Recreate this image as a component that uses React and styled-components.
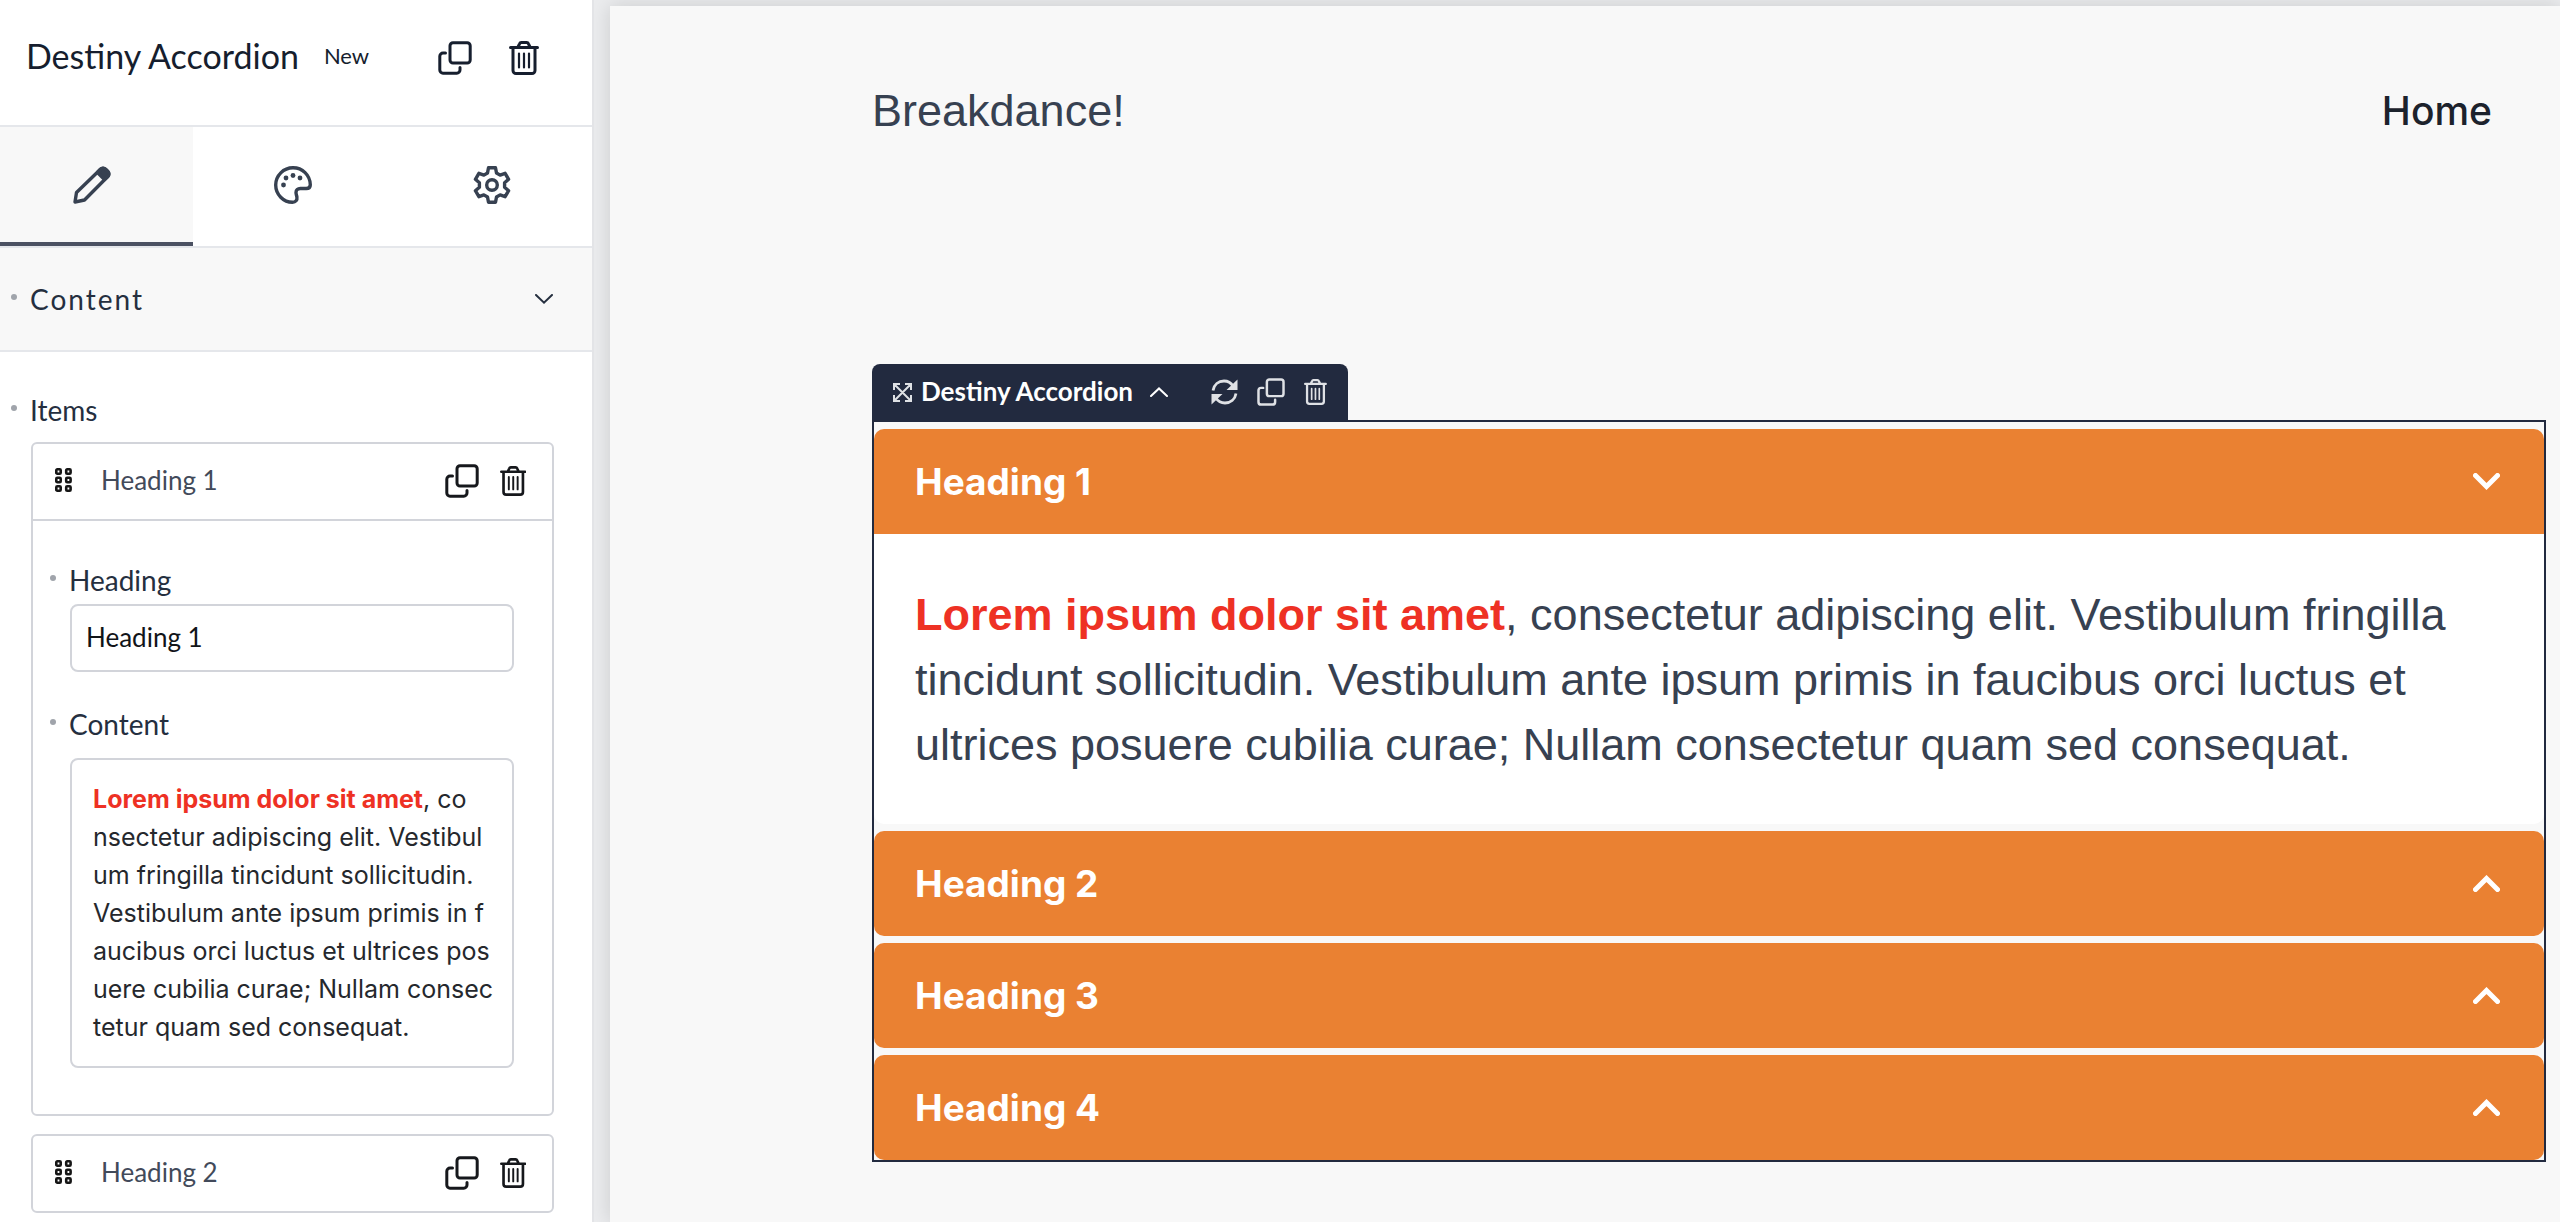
import React, { useState } from "react";
import styled, { createGlobalStyle } from "styled-components";

const GlobalStyle = createGlobalStyle`
  * {
    box-sizing: border-box;
  }
  body {
    margin: 0;
    background-color: #ffffff;
    font-family: Lato, "Open Sans", sans-serif;
  }
  button {
    font: inherit;
    color: inherit;
    background: none;
    border: none;
    padding: 0;
    cursor: pointer;
  }
`;

const Wrapper = styled.div`
  display: flex;
  min-height: 100vh;
`;

const Sidebar = styled.aside`
  flex: 0 0 594px;
  border-right: 2px solid #e3e4e7;
  background-color: #ffffff;
  color: #252f3f;
`;

const Header = styled.header`
  display: flex;
  align-items: center;
  height: 127px;
  padding: 0 53px 10px 26px;
  border-bottom: 2px solid #e5e7eb;
  color: #161e2e;
`;

const Title = styled.h1`
  margin: 0;
  padding-bottom: 4px;
  font-size: 34px;
  font-weight: 400;
  line-height: 40px;
`;

const Tag = styled.span`
  margin-left: 25px;
  padding-bottom: 3px;
  font-size: 22px;
  line-height: 40px;
`;

const Actions = styled.div`
  display: flex;
  align-items: center;
  gap: ${(p) => p.$gap}px;
  margin-left: auto;
`;

const IconButton = styled.button`
  display: flex;
`;

const Tabs = styled.div`
  display: grid;
  grid-template-columns: 193fr 200fr 200fr;
  height: 121px;
  border-bottom: 2px solid #e5e7eb;
`;

const Tab = styled.button`
  display: flex;
  align-items: center;
  justify-content: center;
  color: #374151;
  border-bottom: 4px solid ${(p) => (p.$active ? "#4b5162" : "transparent")};
  background-color: ${(p) => (p.$active ? "#f8f8f8" : "#ffffff")};

  &:first-child {
    padding-right: 8px;
  }
`;

const Section = styled.button`
  display: flex;
  align-items: center;
  width: 100%;
  height: 104px;
  padding: 0 39px 0 11px;
  background-color: #f8f8f8;
  border-bottom: 2px solid #e5e7eb;
  font-size: 28px;
  letter-spacing: 2px;

  & > svg {
    margin-left: auto;
  }
`;

const Dot = styled.span`
  width: 6px;
  height: 6px;
  margin: 0 13px 4px 0;
  border-radius: 50%;
  background-color: #a0a4ab;
`;

const Items = styled.div`
  padding: 42px 38px 8px 31px;
`;

const Label = styled.label`
  display: flex;
  align-items: center;
  margin-left: -20px;
  font-size: 28px;
  line-height: 32px;
`;

const List = styled.div`
  display: flex;
  flex-direction: column;
  gap: 18px;
  margin-top: 16px;
`;

const Card = styled.div`
  border: 2px solid #d2d4da;
  border-radius: 6px;
`;

const CardTop = styled.div`
  display: flex;
  align-items: center;
  height: 75px;
  padding: 0 26px 2px 22px;
  color: #16181c;

  & > span {
    margin-left: 28px;
    padding-bottom: 2px;
    font-size: 26px;
    color: #424a5a;
  }
`;

const CardBody = styled.div`
  display: flex;
  flex-direction: column;
  gap: 36px;
  padding: 43px 38px 46px 37px;
  border-top: 2px solid #d2d4da;
`;

const Field = styled.div`
  display: flex;
  flex-direction: column;
  gap: ${(p) => p.$gap}px;
`;

const Input = styled.input`
  width: 100%;
  height: 68px;
  padding: 0 14px 2px;
  border: 2px solid #d2d4da;
  border-radius: 8px;
  font: inherit;
  font-size: 26px;
  color: #111418;
  outline: none;
`;

const Editor = styled.div`
  padding: 20px 12px 20px 21px;
  border: 2px solid #d2d4da;
  border-radius: 8px;
  font-family: Inter, "Liberation Sans", sans-serif;
  font-size: 25px;
  line-height: 38px;
  color: #25282d;
  outline: none;

  & > p {
    margin: 0;
  }
`;

const Red = styled.strong`
  color: #ee3124;
  font-weight: 700;
`;

const Stage = styled.main`
  flex: 1;
  min-width: 0;
  display: flex;
  padding: 6px 0 0 16px;
  background-color: #ebecee;
  overflow: hidden;
`;

const Canvas = styled.div`
  flex: 1;
  min-width: 0;
  padding: 0 14px 0 262px;
  background-color: #f8f8f8;
  box-shadow: 0 0 20px rgba(0, 0, 0, 0.14);
  font-family: Inter, "Liberation Sans", sans-serif;
  color: #374151;
`;

const Nav = styled.nav`
  display: flex;
  align-items: center;
  justify-content: space-between;
  height: 210px;
  padding: 0 54px 0 0;
`;

const Brand = styled.span`
  font-family: "Liberation Sans", Arial, sans-serif;
  font-size: 45px;
  line-height: 60px;
`;

const NavLink = styled.a`
  font-size: 39px;
  font-weight: 500;
  line-height: 60px;
  color: #1c222c;
  text-decoration: none;
`;

const Toolbar = styled.div`
  display: flex;
  align-items: center;
  width: max-content;
  height: 56px;
  margin-top: 148px;
  padding: 0 21px;
  border-radius: 8px 8px 0 0;
  background-color: #222a3f;
  color: #dfe1e5;
  font-family: Lato, "Open Sans", sans-serif;
`;

const ToolbarName = styled.button`
  display: flex;
  align-items: center;
  margin-right: 43px;
  font-size: 26px;
  font-weight: 700;
  color: #ffffff;

  & > span {
    margin: 0 17px 0 9px;
    padding-bottom: 2px;
  }
`;

const Frame = styled.section`
  border: 2px solid #222a3f;
`;

const AccItem = styled.div`
  margin-top: 7px;
`;

const AccHead = styled.button`
  display: flex;
  align-items: center;
  justify-content: space-between;
  width: 100%;
  height: 105px;
  padding: 0 44px 0 41px;
  border-radius: ${(p) => (p.$open ? "10px 10px 0 0" : "10px")};
  background-color: #ea8132;
  color: #ffffff;
  font-size: 37px;
  font-weight: 700;
`;

const AccBody = styled.div`
  padding: 48px 41px 47px;
  border-radius: 0 0 10px 10px;
  background-color: #ffffff;
  font-family: "Liberation Sans", Arial, sans-serif;
  font-size: 45px;
  line-height: 65px;
`;

const CopyIcon = ({ size = 34, stroke = 3 }) => (
  <svg width={size} height={size} viewBox="0 0 34 34" fill="none" stroke="currentColor" strokeWidth={stroke} strokeLinecap="round" strokeLinejoin="round">
    <rect x="12" y="1.8" width="20.2" height="20.2" rx="3" />
    <path d="M7.5 12H5a3.2 3.2 0 0 0-3.2 3.2v13.8A3.2 3.2 0 0 0 5 32.2h13.8a3.2 3.2 0 0 0 3.2-3.2v-2.5" />
  </svg>
);

const TrashIcon = ({ size = 34 }) => (
  <svg width={(size * 30) / 34} height={size} viewBox="0 0 30 34" fill="none" stroke="currentColor" strokeWidth="3" strokeLinecap="round" strokeLinejoin="round">
    <path d="M1.500 6.500h27M4 7v22.500a3 3 0 0 0 3 3h16a3 3 0 0 0 3-3V7M9 6l1.500-3.200a2 2 0 0 1 1.800-1.200h5.400a2 2 0 0 1 1.800 1.200L21 6" />
    <path strokeWidth="2.2" d="M10 12.500v14M15 12.500v14M20 12.500v14" />
  </svg>
);

const Chevron = ({ w = 18, h = 10, stroke = 2, up }) => (
  <svg width={w} height={h} viewBox={`0 0 ${w} ${h}`} fill="none" stroke="currentColor" strokeWidth={stroke} strokeLinecap="round">
    <path
      d={
        up
          ? `M${stroke / 2} ${h - stroke / 2}L${w / 2} ${stroke * 0.7}L${w - stroke / 2} ${h - stroke / 2}`
          : `M${stroke / 2} ${stroke / 2}L${w / 2} ${h - stroke * 0.7}L${w - stroke / 2} ${stroke / 2}`
      }
    />
  </svg>
);

const PencilIcon = () => (
  <svg width="38" height="38" viewBox="0 0 38 38" fill="none" stroke="currentColor" strokeWidth="3.400" strokeLinejoin="round">
    <path d="M2 36l1.500-9.500L27.500 3.200a3.500 3.500 0 0 1 5 0l2.300 2.300a3.500 3.500 0 0 1 0 5L11.500 34z" />
    <path fill="currentColor" d="M24.500 6.500l3-3.300a3.500 3.500 0 0 1 5 0l2.300 2.300a3.500 3.500 0 0 1 0 5l-3.300 3z" />
  </svg>
);

const PaletteIcon = () => (
  <svg width="38" height="38" viewBox="0 0 38 38" fill="none" stroke="currentColor" strokeWidth="3.400">
    <path d="M19 1.800C9.500 1.800 1.700 9.500 1.700 19S9.500 36.300 18.500 36.300c3.200 0 4.900-2.300 4.400-5.300-.3-1.700-.9-3-.9-4.500 0-2.400 1.800-4 4.300-4h6c2.500 0 4-1.400 4-3.800C36 9 28.500 1.800 19 1.800z" />
    <g fill="currentColor" stroke="none">
      <circle cx="9.500" cy="19" r="2.400" />
      <circle cx="12" cy="12" r="2.400" />
      <circle cx="19" cy="9.500" r="2.400" />
      <circle cx="26" cy="12" r="2.400" />
    </g>
  </svg>
);

const GearIcon = () => (
  <svg width="38" height="38" viewBox="0 0 38 38" fill="none" stroke="currentColor" strokeWidth="3.400" strokeLinejoin="round">
    <path d="M15.500 1.800h7l1 5.200 3.600 2.100 5-1.800 3.500 6-4 3.500v4.400l4 3.500-3.500 6-5-1.800-3.600 2.100-1 5.200h-7l-1-5.200-3.600-2.100-5 1.800-3.500-6 4-3.500v-4.400l-4-3.500 3.500-6 5 1.800 3.600-2.100z" />
    <circle cx="19" cy="19" r="5.300" />
  </svg>
);

const DragIcon = () => (
  <svg width="18" height="25" viewBox="0 0 18 25" fill="none" stroke="#161616" strokeWidth="2.600">
    {[1.3, 9.8, 18.3].map((y) => (
      <g key={y}>
        <rect x="1.300" y={y} width="4.400" height="4.400" rx="1" />
        <rect x="11.200" y={y} width="4.400" height="4.400" rx="1" />
      </g>
    ))}
  </svg>
);

const ExpandIcon = () => (
  <svg width="19" height="19" viewBox="0 0 19 19" fill="none" stroke="#dfe1e5" strokeWidth="2">
    <path d="M1 7V1h6M12 1h6v6M18 12v6h-6M7 18H1v-6M1.500 1.500l16 16M17.500 1.500l-16 16" />
  </svg>
);

const RefreshIcon = () => (
  <svg width="27" height="26" viewBox="0 0 27 26" fill="none" stroke="currentColor" strokeWidth="2.800">
    <path d="M2 11.500C3 5.500 7.500 2 13 2c4 0 7 1.800 9 5M25 14.500C24 20.500 19.500 24 14 24c-4 0-7-1.800-9-5" />
    <path fill="currentColor" stroke="none" d="M26.500 .5v10.500H15.500zM.5 25.500v-10.500h11z" />
  </svg>
);

const LOREM =
  ", consectetur adipiscing elit. Vestibulum fringilla tincidunt sollicitudin. Vestibulum ante ipsum primis in faucibus orci luctus et ultrices posuere cubilia curae; Nullam consectetur quam sed consequat.";

const EDITOR_LINES = [
  "nsectetur adipiscing elit. Vestibul",
  "um fringilla tincidunt sollicitudin.",
  "Vestibulum ante ipsum primis in f",
  "aucibus orci luctus et ultrices pos",
  "uere cubilia curae; Nullam consec",
  "tetur quam sed consequat.",
];

const HEADINGS = ["Heading 1", "Heading 2", "Heading 3", "Heading 4"];

const RepeaterTop = ({ name }) => (
  <CardTop>
    <DragIcon />
    <span>{name}</span>
    <Actions $gap={21}>
      <IconButton aria-label="Duplicate">
        <CopyIcon />
      </IconButton>
      <IconButton aria-label="Delete">
        <TrashIcon size={30} />
      </IconButton>
    </Actions>
  </CardTop>
);

export default function App() {
  const [tab, setTab] = useState(0);
  const [open, setOpen] = useState(0);
  const [heading, setHeading] = useState("Heading 1");
  const names = [heading, ...HEADINGS.slice(1)];

  return (
    <Wrapper>
      <GlobalStyle />
      <Sidebar>
        <Header>
          <Title>Destiny Accordion</Title>
          <Tag>New</Tag>
          <Actions $gap={37}>
            <IconButton aria-label="Duplicate">
              <CopyIcon />
            </IconButton>
            <IconButton aria-label="Delete">
              <TrashIcon />
            </IconButton>
          </Actions>
        </Header>

        <Tabs>
          {[PencilIcon, PaletteIcon, GearIcon].map((Icon, i) => (
            <Tab key={i} $active={tab === i} onClick={() => setTab(i)}>
              <Icon />
            </Tab>
          ))}
        </Tabs>

        <Section>
          <Dot />
          Content
          <Chevron />
        </Section>

        <Items>
          <Label as="div">
            <Dot />
            Items
          </Label>
          <List>
            <Card>
              <RepeaterTop name={names[0]} />
              <CardBody>
                <Field $gap={8}>
                  <Label htmlFor="heading">
                    <Dot />
                    Heading
                  </Label>
                  <Input id="heading" value={heading} onChange={(e) => setHeading(e.target.value)} />
                </Field>
                <Field $gap={18}>
                  <Label as="div" id="content-label">
                    <Dot />
                    Content
                  </Label>
                  <Editor role="textbox" aria-labelledby="content-label" contentEditable suppressContentEditableWarning spellCheck={false}>
                    <p>
                      <Red>Lorem ipsum dolor sit amet</Red>, co
                    </p>
                    {EDITOR_LINES.map((line) => (
                      <p key={line}>{line}</p>
                    ))}
                  </Editor>
                </Field>
              </CardBody>
            </Card>
            <Card>
              <RepeaterTop name={names[1]} />
            </Card>
          </List>
        </Items>
      </Sidebar>

      <Stage>
        <Canvas>
          <Nav>
            <Brand>Breakdance!</Brand>
            <NavLink href="#">Home</NavLink>
          </Nav>

          <Toolbar>
            <ToolbarName>
              <ExpandIcon />
              <span>Destiny Accordion</span>
              <Chevron up />
            </ToolbarName>
            <Actions $gap={19}>
              <IconButton aria-label="Refresh">
                <RefreshIcon />
              </IconButton>
              <IconButton aria-label="Duplicate">
                <CopyIcon size={28} />
              </IconButton>
              <IconButton aria-label="Delete">
                <TrashIcon size={26} />
              </IconButton>
            </Actions>
          </Toolbar>
          <Frame>
            {names.map((name, i) => (
              <AccItem key={i}>
                <AccHead $open={open === i} aria-expanded={open === i} onClick={() => setOpen(open === i ? -1 : i)}>
                  {name}
                  <Chevron w={27} h={17} stroke={5} up={open !== i} />
                </AccHead>
                {open === i && (
                  <AccBody>
                    <Red>Lorem ipsum dolor sit amet</Red>
                    {LOREM}
                  </AccBody>
                )}
              </AccItem>
            ))}
          </Frame>
        </Canvas>
      </Stage>
    </Wrapper>
  );
}
